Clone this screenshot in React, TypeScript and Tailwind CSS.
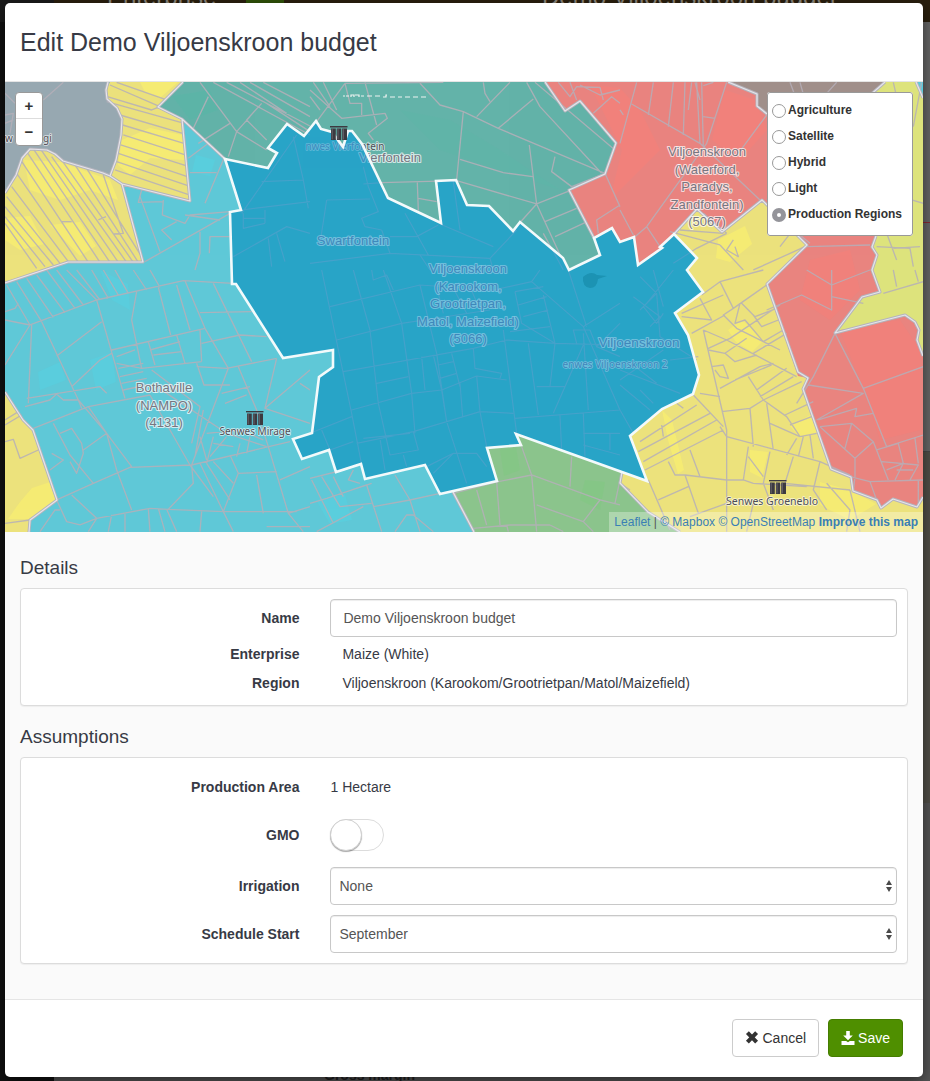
import { useState, type ReactNode } from "react";

/* ---------- Map data ---------- */

const SELECTED =
  "225,159 268,168 277,153 268,148 287,124 304,136 316,121 321,129 332,132 343,147 348,131 352,131 362,144 388,198 441,223 436,181 456,180 467,205 489,206 513,231 520,222 563,258 569,270 600,255 594,238 612,228 620,242 634,237 638,265 662,248 660,247 674,234 697,258 687,270 703,292 675,313 688,335 699,375 693,394 662,409 630,436 647,481 516,434 521,445 487,448 497,481 440,494 425,465 365,479 361,464 336,472 329,450 302,459 293,439 312,433 319,377 333,367 333,350 283,358 236,284 232,284 230,212 241,210";

const REGIONS = [
  { fill: "#63b3a9", points: "183,82 158,107 182,119 225,159 268,168 330,300 569,290 600,255 594,238 569,190 605,174 616,143 580,101 565,111 545,82" },
  { fill: "#97a8b1", points: "5,82 110,82 106,90 107,99 117,108 122,119 121,135 116,160 110,176 103,173 63,161 55,154 47,150 30,149 22,158 16,175 5,193" },
  { fill: "#ece27c", points: "110,82 106,90 107,99 117,108 122,119 121,135 116,160 110,176 122,184 190,201 182,119 158,107 183,82" },
  { fill: "#ece27c", points: "5,193 16,175 22,158 30,149 47,150 55,154 63,161 103,173 110,176 122,184 143,262 68,262 5,283" },
  { fill: "#e9847f", points: "545,82 565,111 580,101 616,143 605,174 569,190 594,238 620,270 674,250 722,232 780,190 780,82" },
  { fill: "#a08f8a", points: "728,82 757,94 757,106 767,114 885,114 885,82" },
  { fill: "#ece27c", points: "640,290 674,234 697,209 722,232 762,200 807,245 767,284 798,372 808,378 802,389 831,469 851,477 853,491 877,500 881,508 893,499 917,507 923,497 923,532 680,532 648,512 620,483 600,420" },
  { fill: "#e9847f", points: "762,200 807,245 767,284 798,376 808,378 803,389 831,469 851,477 853,491 877,500 881,508 893,499 917,507 923,497 923,200" },
  { fill: "#dde37c", points: "885,82 860,104 876,236 872,247 877,255 872,270 880,292 862,297 835,333 905,315 915,322 919,330 917,340 923,356 923,82" },
  { fill: "#5ccadb", points: "916,82 923,82 923,98" },
  { fill: "#8bc48c", points: "516,434 521,445 487,448 497,481 453,492 474,532 680,532 648,512 620,483 622,472" },
  { fill: "#ece27c", points: "5,392 23,420 33,430 57,500 30,520 29,532 5,532" },
];

/* Lighter land-cover blotches, one list per tint */
const PATCHES = [
  { fill: "#faf070", points: "122,140 150,128 182,135 186,160 150,158 130,175 118,165" },
  { fill: "#faf070", points: "140,82 178,82 160,98 145,92" },
  { fill: "#faf070", points: "24,160 60,162 110,180 118,200 90,190 60,200 30,190" },
  { fill: "#faf070", points: "5,218 30,216 44,244 20,250 5,240" },
  { fill: "#faf070", points: "50,225 80,222 96,246 80,256" },
  { fill: "#faf070", points: "32,488 50,482 56,500 30,519 8,519 20,502" },
  { fill: "#faf070", points: "718,240 745,226 752,244 730,262 716,258" },
  { fill: "#faf070", points: "728,330 742,320 764,340 752,352 736,342" },
  { fill: "#faf070", points: "790,426 812,414 818,432 800,438" },
  { fill: "#faf070", points: "750,450 768,452 762,478 750,472" },
  { fill: "#faf070", points: "820,482 850,490 876,504 850,520 820,505" },
  { fill: "#faf070", points: "662,410 672,420 684,470 678,474 668,440" },
  { fill: "#f4807a", points: "590,85 620,88 640,110 660,150 640,170 610,200 622,150" },
  { fill: "#f4807a", points: "725,90 755,100 767,130 740,160 712,140" },
  { fill: "#f4807a", points: "840,330 900,320 920,350 920,430 880,440 862,385" },
  { fill: "#f4807a", points: "810,260 850,250 860,290 830,320 800,300" },
  { fill: "#58d0e0", points: "38,372 60,362 66,380 40,390" },
  { fill: "#58d0e0", points: "196,155 215,160 210,176 192,172" },
  { fill: "#58d0e0", points: "90,360 112,352 116,382 96,390" },
  { fill: "#58d0e0", points: "316,500 345,494 352,520 330,524" },
  { fill: "#58d0e0", points: "100,270 128,284 130,310 112,300" },
  { fill: "#5bb6a7", points: "172,96 210,90 218,110 190,120" },
  { fill: "#5fb5a8", points: "400,110 450,120 500,150 560,190 500,170 440,150" },
  { fill: "#83c884", points: "500,450 516,448 520,470 504,476" },
  { fill: "#83c884", points: "585,480 605,482 600,510 580,500" },
];

/* Farm boundaries, stored in 270px-high survey tiles at three units per pixel */
const FARM_TILES = [
  {
    transform: "translate(0 0) scale(0.3333)",
    d: "M330 255L480 320M350 247L500 300M322 290L455 330L480 320M320 305L545 368M360 345L548 400M368 375L552 430M370 405L556 465M362 435L560 498M355 460L562 530M350 485L566 558M345 510L568 585M62 480L265 787M80 455L300 787M100 447L330 787M125 452L355 787M155 470L380 787M190 487L400 787M225 495L415 787M260 505L425 770M310 525L370 700L340 702M50 520L235 787M35 560L205 785M20 590L180 790M15 620L160 795M15 650L135 800M15 670L110 805M185 665L215 665M295 660L318 650M600 247L710 395L800 450M625 290L580 385M710 395L685 470M690 370L595 430M640 247L930 405M680 247L930 378M720 247L860 340M750 247L930 350M790 247L930 320M750 350L710 395M785 310L740 360L800 420M800 310L930 395M625 430L565 475M650 518L570 518M672 475L615 610M425 570L415 607L490 605M490 600L487 645L555 670L570 645L690 635M420 590L480 755M515 720L485 690L530 665M435 785L690 640M600 695L600 760L585 810M690 710L630 710L628 760M555 645L660 660M890 405L725 640M785 545L910 540M725 630L930 605M795 630L795 670M730 640L730 685L795 670M730 655L795 655M700 770L860 680L930 700M805 715L815 800M830 700L855 785M880 410L910 540L925 625M15 280L45 310M15 345L40 340L30 400M40 360L15 370M190 247L130 300",
  },
  {
    transform: "translate(310 0) scale(0.3333)",
    d: "M20 365L105 250L400 247M0 270L95 355L225 340L232 355L175 400L190 420M105 250L120 310L155 310L155 345M165 247L200 375M40 247L80 330M0 290L30 330M10 247L60 320M330 250L390 315L460 335L565 385L885 520M520 247L525 280L540 305M500 350L600 247M670 297L565 385M650 247L690 320L875 520M675 247L915 450M460 335L440 540M450 478L580 518L668 530M658 435L680 612M735 470L725 515L785 560L885 520M680 612L440 542L215 548M322 548L325 632M325 595L380 605M680 612L610 690M680 612L755 775M680 612L780 572M705 665L800 625M735 710L825 668M215 548L160 552M160 500L175 560L205 635L155 655L165 680L215 690M50 600L180 597M50 600L30 730M385 675L320 710L240 710M285 640L355 765M215 690L240 760L0 790M240 760L540 775L620 690M430 545L450 690M390 672L550 740M540 775L550 810M885 520L930 620M930 615L860 660L865 700M930 310L905 290L850 340M780 247L800 300M810 255L870 285L930 270M745 247L780 290L800 260L870 262L880 300M330 765L360 810M700 700L760 810",
  },
  {
    transform: "translate(620 0) scale(0.3333)",
    d: "M50 247L0 430M35 312L240 430M100 247L85 345M160 247L145 380M195 247L190 405M230 247L240 430M245 247L250 440M320 247L260 430L80 680L45 710M240 430L420 600M440 345L355 460M215 247L205 330M250 350L285 355M80 680L120 740M0 330L10 345M0 630L40 705M225 247L240 300M250 257L280 247M150 695L300 735M180 690L310 700M160 790L230 745L320 700M320 700L250 640M300 735L370 810M340 720L320 750L355 770L345 740M400 810L555 740M510 247L530 300M540 247L555 300M550 650L480 740M560 740L750 735M540 705L570 730M650 247L620 280M770 740L870 745L880 800M820 745L900 740M905 247L880 380M820 247L830 290M875 600L910 610M800 700L830 780",
  },
  {
    transform: "translate(0 270) scale(0.3333)",
    d: "M20 45L90 165M50 35L125 155M80 25L160 142M110 15L195 128M140 0L225 115M170 0L250 105M200 0L290 90M230 0L300 90M275 0L325 85M310 0L355 75M345 0L385 70M400 0L440 60M450 0L480 52M15 150L90 165L290 90L550 32L700 40M90 165L15 285M95 165L85 400M125 155L235 390L320 490L395 590M290 90L375 385M305 155L170 258M215 350L300 270L335 250M410 65L395 150L425 295M475 52L512 195M530 45L570 180M555 32L615 175L685 295M640 40L755 275M335 240L615 175M600 128L755 125M605 220L720 195L800 200M605 275L425 295L350 280M350 260L405 240M355 295L430 280M360 320L430 305M365 340L440 325M370 360L440 345M445 215L465 285M450 240L540 215M460 255L545 245M530 195L555 280M600 180L605 275M590 280L612 345L690 345M590 290L680 295L830 265M685 295L575 585M830 265L795 415L930 300M795 415L930 460M715 290L770 420L805 530M665 370L750 350M675 400L740 375M80 385L300 350L320 370M100 475L265 410L450 375M75 410L150 390L170 372L190 390L235 390M15 125L45 115L55 100M235 390L245 415M450 375L570 585M265 410L320 490L350 600L395 720M470 350L680 490L800 530M455 300L600 410L575 520M390 592L575 585L870 515M575 585L580 640L505 718M395 590L280 640L170 690M505 718L670 725L890 725M670 725L715 610L830 605M715 610L690 555M600 580L670 725M570 585L640 680M620 580L690 690M640 575L700 640M770 615L790 730M805 530L865 730L930 710M840 630L930 590M865 730L910 785M605 725L600 785M670 725L700 785M800 770L930 770M290 745L450 715L505 718M290 745L265 785M335 735L325 785M375 730L375 785M445 715L450 785M475 715L495 785M500 718L530 785M215 675L290 745L240 765M170 690L200 755L240 765M160 460L210 555L280 640M180 490L215 475L245 520L250 550L230 610L210 575M250 540L320 490M150 600L190 570L155 550M120 785L165 720L180 720M600 500L620 570M620 490L720 480L790 510M640 520L700 530M630 560L680 500M720 520L710 560M750 500L740 550M620 580L640 500M585 560L610 420M900 340L930 360M15 450L55 425M15 465L65 435M15 515L40 508L60 565L115 540M90 750L15 760",
  },
  {
    transform: "translate(310 270) scale(0.3333)",
    d: "M35 0L125 430L160 610M130 0L180 180L205 400L240 555L325 540L310 485M220 0L275 160L305 370L315 490M330 45L380 250L410 455L470 640M60 110L330 45L550 60L665 35M80 210L275 160L540 120M100 305L490 235L590 210L735 220L930 225M125 420L305 370L395 360L500 318L590 330M140 520L310 485L510 425L610 430M200 340L295 320M335 260L345 360M370 255L395 360L410 455M385 285L430 275M390 325L440 310M425 250L450 350M490 235L495 295L575 310L570 325M450 340L458 440M500 318L510 425L530 530M580 180L620 490M655 220L685 435M735 220L720 350M680 350L765 350L820 225M765 350L730 430M820 190L835 420M615 445L930 420M750 435L755 540M820 430L825 560M820 490L930 490M900 490L900 540M820 525L930 555M665 35L820 170L930 100M665 35L690 0M775 0L830 170M820 170L930 420M615 65L635 160L735 220M700 75L735 220M615 65L700 50M625 105L710 80M640 140L715 120M600 185L720 170M425 45L470 130M380 50L400 130M480 50L510 120M0 490L125 440M35 480L60 540L130 515M160 505L300 490M210 505L225 600M280 555L290 590M350 590L430 550L500 550L530 590M430 550L370 610M185 0L190 30L230 15L250 60M800 220L790 180L840 180L860 230L930 260M860 230L930 160M0 625L100 600L150 585M5 630L70 760M35 620L90 710L185 700M70 620L100 680M130 600L115 630L150 640M125 660L170 645L215 785M255 615L300 690L390 670M300 690L190 710M300 690L330 785M255 785L290 735L310 735L370 785M0 700L50 685L185 640M20 785L160 710M500 660L530 765M560 635L570 765M665 615L565 635L430 670M665 615L635 530M665 615L870 690L820 755L680 705M665 615L680 785M785 560L780 650M870 690L930 705M490 775L600 765L720 765M820 755L850 785M930 630L915 700M590 765L595 785M720 765L760 785",
  },
  {
    transform: "translate(620 270) scale(0.3333)",
    d: "M245 75L300 35L340 115M300 35L430 0M240 85L275 150L185 140M185 130L310 75M340 115L440 45M340 115L310 135L350 175L430 215M215 190L315 135M250 180L320 480L320 785M250 180L320 210L530 320M265 235L330 205L480 105M265 240L315 250L345 275L410 255M315 250L380 205M360 100L345 160L375 150L430 215L490 180M400 135L425 170L475 150M365 100L405 140L470 115M400 250L500 190M430 215L480 240M275 290L310 285L325 325L300 320L285 300M300 355L420 290L460 280M345 330L455 285M385 320L430 390L500 440L540 500M410 360L500 295M420 380L520 320M430 390L545 335M305 425L390 415L430 390M390 415L400 530M440 400L460 540M450 460L540 500L590 490M300 470L320 500L600 575L690 615M495 435L580 395M510 465L575 440M530 505L500 555M550 500L535 560M570 495L580 565M220 375L310 470M240 370L300 380M60 515L230 405M55 545L270 430M70 575L290 450M75 600L310 480M125 465L130 500M210 540L240 620M145 575L165 615L195 615L320 630M195 615L235 730M115 690L205 650M85 630L150 780M385 530L370 630M385 560L430 620M450 545L430 640M520 560L495 640L690 660M600 575L580 660L620 720M320 630L370 630L400 640L560 650M400 700L380 785M430 640L460 720M320 700L210 740M620 640L690 720L680 785M690 660L720 785M440 120L545 75L635 120L635 0M560 0L635 45M635 80L730 100M635 45L750 0M645 190L730 355L800 530L910 495M645 190L580 320L530 400M730 355L910 290M565 345L730 370L590 450M595 450L710 415L705 440L760 430M600 470L695 460L675 535M695 460L760 515L705 565L600 470M760 515L805 630M705 565L705 620L700 665M770 540L835 520L850 580L800 600M785 575L895 585L870 630M835 520L850 580L825 630M885 505L895 580M690 620L750 635L910 630M750 635L770 690M830 600L880 600M895 630L895 700M820 0L830 50M885 0L895 35M790 70L910 35M0 640L30 660M170 400L190 415M0 420L40 490M0 345L90 420M0 300L180 370M20 270L110 340M0 330L130 240M60 360L100 400M100 0L130 110M60 20L110 70L60 120M40 80L120 140L90 170M160 0L80 100M110 70L120 200L230 270M70 110L110 160L130 130M150 270L235 260",
  },
];

const REGION_LINES =
  "M108 82L106 90L107 99L117 108L122 119L121 135L116 160L110 176L122 184L190 201L182 119L158 107L183 82M5 193L16 175L22 158L30 149L47 150L55 154L63 161L103 173L110 176M122 184L143 262L68 262L5 283M182 119L225 159M545 82L565 111L580 101L616 143L605 174L569 190L594 238M728 82L757 94L757 106L767 114M674 234L697 209L722 232L762 200L807 245L767 284L798 372L808 378L803 389L831 469L851 477L853 491L877 500L881 508L893 499L917 507L923 497M885 82L860 104M876 236L872 247L877 255L872 270L880 292L862 297L835 333L905 315L915 322L919 330L917 340L923 356M916 82L923 98M453 492L474 532M622 472L620 483L648 512L680 532M5 392L23 420L33 430L57 500L30 520L29 532";

type LabelProps = {
  x: number;
  y: number;
  lines: string[];
  size?: number;
  small?: boolean;
  onSelected?: boolean;
  anchor?: "start" | "middle";
};

function Label({ x, y, lines, size = 13, small = false, onSelected = false, anchor = "middle" }: LabelProps) {
  const plain = small ? "#4d4d55" : "#777680";
  return (
    <text
      textAnchor={anchor}
      fontSize={size}
      fontFamily={small ? "'Noto Sans', 'Open Sans', sans-serif" : "'Liberation Sans', Arial, sans-serif"}
      fill={onSelected ? "#3f88bb" : plain}
      stroke={onSelected ? "#8fcbe6" : "#ffffff"}
      strokeOpacity={0.7}
      strokeWidth={small ? 1.6 : 2.2}
      strokeLinejoin="round"
      paintOrder="stroke"
    >
      {lines.map((line, i) => (
        <tspan key={line} x={x} y={y + i * 17.5}>
          {line}
        </tspan>
      ))}
    </text>
  );
}

function Silo({ x, y }: { x: number; y: number }) {
  return (
    <g transform={`translate(${x} ${y})`} fill="#3c3a40">
      <path d="M0 0h17.500v1.400H0z" />
      <path d="M1 2.400h4.800V14H1zM6.800 2.400h4.400V14H6.800zM12.200 2.400H17V14h-4.800z" />
      <path d="M2.200 2.400v11M8 2.400v11M13.400 2.400v11" stroke="#77747c" strokeWidth="0.700" />
    </g>
  );
}

function RegionMap() {
  return (
    <svg viewBox="5 82 918 450" preserveAspectRatio="xMidYMid slice" className="block h-full w-full" role="img" aria-label="Production regions">
      <defs>
        <clipPath id="selected-region">
          <polygon points={SELECTED} />
        </clipPath>
        <clipPath id="other-regions">
          <path clipRule="evenodd" d={`M5 82H923V532H5ZM${SELECTED}Z`} />
        </clipPath>
      </defs>
      <rect x="5" y="82" width="918" height="450" fill="#5fc8d7" />
      {REGIONS.map((r, i) => (
        <polygon key={i} points={r.points} fill={r.fill} />
      ))}
      <g opacity="0.7">
        {PATCHES.map((p, i) => (
          <polygon key={i} points={p.points} fill={p.fill} />
        ))}
      </g>
      <g fill="none" stroke="#b5afb8" strokeWidth="4" strokeOpacity="0.85" strokeLinejoin="round">
        {FARM_TILES.map((t) => (
          <path key={t.transform} transform={t.transform} d={t.d} />
        ))}
      </g>
      <g fill="none" strokeLinejoin="round">
        <path d={REGION_LINES} stroke="#b4b4bd" strokeWidth="3" />
        <path d={REGION_LINES} stroke="#e6e4ea" strokeWidth="1.200" />
      </g>
      <Label x={345} y={150} lines={["nwes Vierfontein"]} size={10} small />
      <Label x={390} y={162} lines={["Vierfontein"]} />

      <polygon points={SELECTED} fill="#28a4c7" />
      <g clipPath="url(#selected-region)">
        <g fill="none" stroke="#4fa0cb" strokeWidth="3.600" strokeOpacity="0.75" strokeLinejoin="round">
          {FARM_TILES.map((t) => (
            <path key={t.transform} transform={t.transform} d={t.d} />
          ))}
        </g>
        <path d="M583 277q8-7 14-2l10 1-9 3q-1 9-8 9-8-1-7-11z" fill="#1c93b3" />
        <g opacity="0.85">
          <Label x={345} y={150} lines={["nwes Vierfontein"]} size={10} small onSelected />
          <Label x={390} y={162} lines={["Vierfontein"]} onSelected />
        </g>
      </g>
      <Label x={353} y={245} lines={["Swartfontein"]} onSelected />
      <Label x={468} y={273} lines={["Viljoenskroon", "(Karookom,", "Grootrietpan,", "Matol, Maizefield)", "(5066)"]} onSelected />
      <Label x={639} y={347} lines={["Viljoenskroon"]} size={13.5} onSelected />
      <Label x={615} y={368} lines={["enwes Viljoenskroon 2"]} size={10} small onSelected />
      <polygon points={SELECTED} fill="none" stroke="#f3fafb" strokeWidth="2.600" strokeLinejoin="miter" />
      <Silo x={330} y={126} />

      <Label x={707} y={156} lines={["Viljoenskroon", "(Waterford,", "Paradys,", "Zandfontein)", "(5067)"]} />
      <Label x={164} y={392} lines={["Bothaville", "(NAMPO)", "(4131)"]} />
      <Silo x={246} y={411} />
      <Label x={255} y={435} lines={["Senwes Mirage"]} size={10} small />
      <Silo x={769} y={480} />
      <Label x={772} y={505} lines={["Senwes Groeneblo"]} size={10.5} small />
      <path d="M343 96h2m1 0h3m2 1v-2h3v2m1-2h4v2m2-1h3m3 0h5m3 0h5m3 1h3v-2h1m3 2h5m3 0h4m3 0h5m3 0h5m3 0h5" stroke="#eef3f2" strokeWidth="1.200" fill="none" />
      <Label x={5} y={142} lines={["w"]} size={10} small anchor="start" />
      <Label x={43} y={142} lines={["gi"]} size={10} small anchor="start" />
    </svg>
  );
}

/* ---------- Controls ---------- */

const LAYERS = ["Agriculture", "Satellite", "Hybrid", "Light", "Production Regions"];

function LayerPicker() {
  const [layer, setLayer] = useState("Production Regions");
  return (
    <fieldset className="absolute top-[10px] right-[10px] rounded-[3px] border border-[#999] bg-white pt-1 pr-[10px] pb-2 pl-1">
      {LAYERS.map((name) => (
        <label key={name} className="flex h-[26px] items-center gap-[2px] text-[12px] font-bold text-[#333]">
          <input
            type="radio"
            name="layer"
            checked={layer === name}
            onChange={() => setLayer(name)}
            className="mt-[2px] h-[14px] w-[14px] appearance-none rounded-full border border-[#999] bg-white checked:border-[5px] checked:border-[#94949a]"
          />
          {name}
        </label>
      ))}
    </fieldset>
  );
}

function Row({ label, htmlFor, className = "", children }: { label: string; htmlFor?: string; className?: string; children: ReactNode }) {
  return (
    <div className={`grid grid-cols-[31%_minmax(0,1fr)] items-center gap-x-[31px] ${className}`}>
      {htmlFor ? (
        <label htmlFor={htmlFor} className="text-right font-bold">
          {label}
        </label>
      ) : (
        <span className="text-right font-bold">{label}</span>
      )}
      <div className="min-w-0">{children}</div>
    </div>
  );
}

function Select({ id, options }: { id: string; options: string[] }) {
  return (
    <div className="relative">
      <select id={id} className="block h-[38px] w-full appearance-none rounded-[4px] border border-[#c8c8c8] bg-white px-2 text-[14px] text-[#555] shadow-[inset_0_1px_1px_rgba(0,0,0,0.075)]">
        {options.map((o) => (
          <option key={o}>{o}</option>
        ))}
      </select>
      <svg viewBox="0 0 6 12" className="pointer-events-none absolute top-[13px] right-[5px] h-3 w-[6px] text-[#4a4a4a]" fill="currentColor" aria-hidden="true">
        <path d="M3 0L6 5H0zM3 12L6 7H0z" />
      </svg>
    </div>
  );
}

function Toggle({ id }: { id: string }) {
  return (
    <label className="relative block h-8 w-[54px]">
      <input id={id} type="checkbox" role="switch" className="peer absolute inset-0 h-8 w-[54px] appearance-none rounded-full border border-[#dcdcdc] bg-white checked:bg-[#4f8f00]" />
      <span className="pointer-events-none absolute top-0 left-0 h-8 w-8 rounded-full border border-[#d0d0d0] bg-white shadow-[0_1px_1px_rgba(0,0,0,0.35)] peer-checked:left-[22px]" />
    </label>
  );
}

function Backdrop() {
  return (
    <div className="absolute inset-0 flex overflow-hidden bg-[#525252]" aria-hidden="true">
      <div className="w-[54px] shrink-0 bg-[#111]">
        <div className="h-[22px] bg-[#1b1b1b]" />
      </div>
      <div className="flex min-w-0 flex-1 flex-col">
        <div className="h-[22px] bg-[#2a1f0e]" />
        <div className="h-[430px] border-b border-[#484848] bg-[#666]" />
        <div className="h-[351px] bg-[#514f48]" />
        <div className="flex-1 bg-[#555]" />
      </div>
      <span className="absolute -top-[15px] left-[107px] text-[24px] leading-6 text-[#8c867c]">Enterprise</span>
      <span className="absolute -top-[15px] left-[542px] text-[24px] leading-6 text-[#8c867c]">Demo Viljoenskroon budget</span>
      <span className="absolute top-0 left-[246px] h-[3px] w-[38px] bg-[#2f5208]" />
      <span className="absolute bottom-[-4px] left-[324px] text-[14px] leading-5 font-bold text-[#222]">Gross margin</span>
      <span className="absolute top-[222px] right-0 h-px w-2 bg-[#8a2a32]" />
    </div>
  );
}

const PANEL = "rounded-[4px] border border-[#dcdcdc] bg-white px-[10px] pt-[10px] shadow-[0_1px_1px_rgba(0,0,0,0.05)]";
const LINK = "text-[#3a7fb5]";

export default function App() {
  const [name, setName] = useState("Demo Viljoenskroon budget");

  return (
    <div className="relative min-h-screen pt-[3px] pr-[7px] pb-1 pl-[5px] font-['Liberation_Sans',Arial,sans-serif] text-[14px] leading-5 text-[#373a45]">
      <Backdrop />
      <div role="dialog" aria-labelledby="dialog-title" className="relative overflow-hidden rounded-[5px] bg-white shadow-[0_5px_15px_rgba(0,0,0,0.5)]">
        <header className="flex h-[79px] items-center border-b border-[#e5e5e5] px-[15px]">
          <h1 id="dialog-title" className="text-[25px] leading-8">
            Edit Demo Viljoenskroon budget
          </h1>
        </header>

        <div className="relative h-[450px] overflow-hidden">
          <RegionMap />
          <div className="absolute top-[10px] left-[10px] flex w-7 flex-col overflow-hidden rounded-[4px] border border-[#999] bg-white text-[15px] font-bold text-[#333]">
            <button type="button" aria-label="Zoom in" className="flex h-[26px] items-center justify-center border-b border-[#ddd]">
              +
            </button>
            <button type="button" aria-label="Zoom out" className="flex h-[26px] items-center justify-center">
              −
            </button>
          </div>
          <LayerPicker />
          <div className="absolute right-0 bottom-0 bg-white/30 px-[5px] text-[12px] leading-5 whitespace-nowrap text-[#555]">
            <a href="#leaflet" className={LINK}>Leaflet</a> | <a href="#mapbox" className={LINK}>© Mapbox</a>{" "}
            <a href="#osm" className={LINK}>© OpenStreetMap</a>{" "}
            <a href="#improve" className={`${LINK} font-bold`}>Improve this map</a>
          </div>
        </div>

        <main className="bg-[#fafafa] px-[15px] pt-6 pb-[35px]">
          <h2 className="mb-2 text-[19px] leading-6">Details</h2>
          <section className={`${PANEL} pb-2`}>
            <Row label="Name" htmlFor="name" className="mb-[2px]">
              <input
                id="name"
                type="text"
                value={name}
                onChange={(e) => setName(e.target.value)}
                className="block h-[38px] w-full rounded-[4px] border border-[#c8c8c8] bg-white px-3 text-[14px] text-[#555] shadow-[inset_0_1px_1px_rgba(0,0,0,0.075)]"
              />
            </Row>
            <Row label="Enterprise" className="h-[29px]">
              <span className="pl-3">Maize (White)</span>
            </Row>
            <Row label="Region" className="h-[29px]">
              <span className="pl-3">Viljoenskroon (Karookom/Grootrietpan/Matol/Maizefield)</span>
            </Row>
          </section>

          <h2 className="mt-[19px] mb-2 text-[19px] leading-6">Assumptions</h2>
          <section className={`${PANEL} flex flex-col gap-[10px] pb-[10px]`}>
            <Row label="Production Area" className="h-[38px]">
              1 Hectare
            </Row>
            <Row label="GMO" htmlFor="gmo" className="mb-[3px] h-[38px]">
              <Toggle id="gmo" />
            </Row>
            <Row label="Irrigation" htmlFor="irrigation">
              <Select id="irrigation" options={["None", "Full", "Supplementary"]} />
            </Row>
            <Row label="Schedule Start" htmlFor="start">
              <Select id="start" options={["September", "October", "November", "December"]} />
            </Row>
          </section>
        </main>

        <footer className="flex justify-end gap-[9px] border-t border-[#e5e5e5] px-5 pt-[19px] pb-5">
          <button type="button" className="flex h-[38px] items-center gap-[3px] rounded-[4px] border border-[#ccc] bg-white px-3 text-[#333]">
            <svg viewBox="0 0 14 14" className="h-[14px] w-[14px]" aria-hidden="true">
              <path d="M2.400 1.600L11.600 11.200M11.600 1.600L2.400 11.200" stroke="currentColor" strokeWidth="4" />
            </svg>
            Cancel
          </button>
          <button type="button" className="flex h-[38px] items-center gap-[3px] rounded-[4px] border border-[#457d00] bg-[#4f8f00] px-3 text-white">
            <svg viewBox="0 0 14 14" className="h-[14px] w-[14px]" fill="currentColor" aria-hidden="true">
              <path d="M5.200 0h3.600v4.600h3L7 9.300 2.200 4.600h3z" />
              <path d="M.5 10h4.600L7 11.300 8.900 10h4.600v4H.5z" />
            </svg>
            Save
          </button>
        </footer>
      </div>
    </div>
  );
}
